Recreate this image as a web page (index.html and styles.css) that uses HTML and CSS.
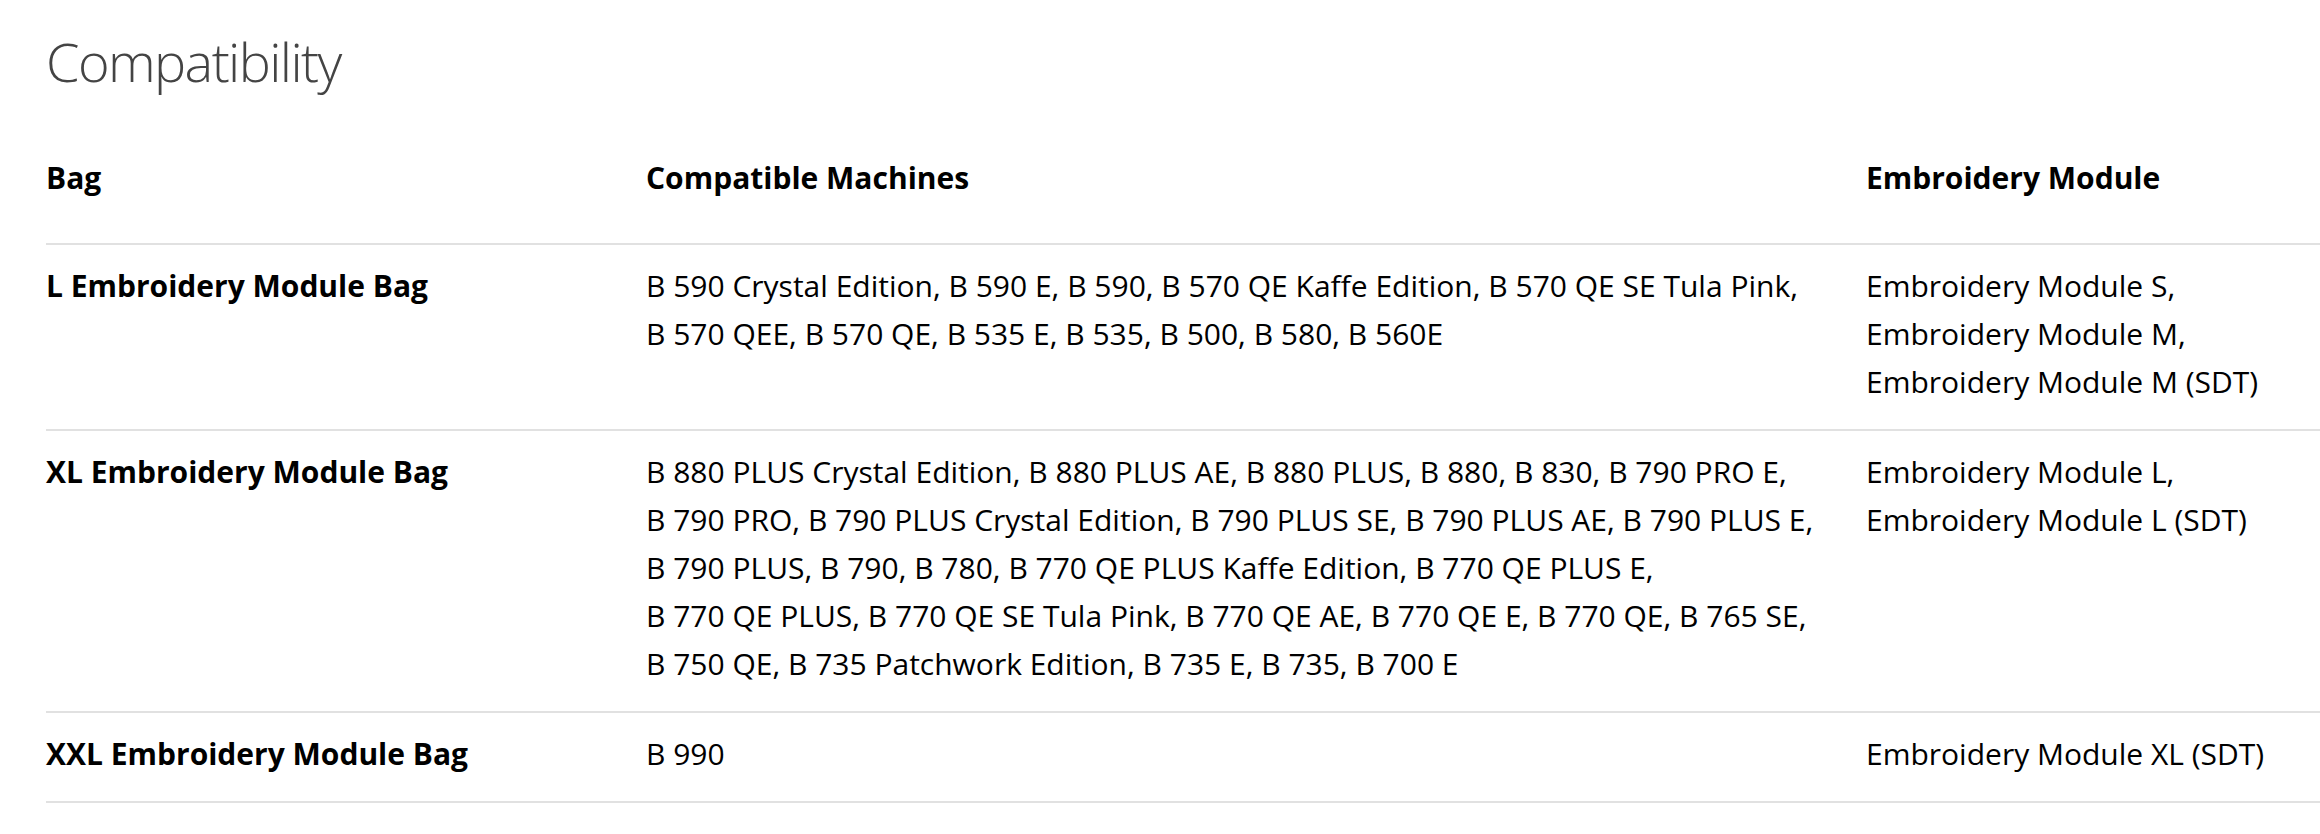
FILE: index.html
```html
<!DOCTYPE html>
<html lang="en">
<head>
<meta charset="utf-8">
<title>Compatibility</title>
<link rel="stylesheet" href="styles.css">
</head>
<body>
<section class="compat">
  <h2 class="compat__title">Compatibility</h2>
  <table class="compat__table">
    <colgroup>
      <col class="col-bag">
      <col class="col-machines">
      <col class="col-module">
    </colgroup>
    <thead>
      <tr>
        <th>Bag</th>
        <th>Compatible Machines</th>
        <th>Embroidery Module</th>
      </tr>
    </thead>
    <tbody>
      <tr>
        <th>L Embroidery Module Bag</th>
        <td>B&nbsp;590&nbsp;Crystal&nbsp;Edition, B&nbsp;590&nbsp;E, B&nbsp;590, B&nbsp;570&nbsp;QE&nbsp;Kaffe&nbsp;Edition, B&nbsp;570&nbsp;QE&nbsp;SE&nbsp;Tula&nbsp;Pink, B&nbsp;570&nbsp;QEE, B&nbsp;570&nbsp;QE, B&nbsp;535&nbsp;E, B&nbsp;535, B&nbsp;500, B&nbsp;580, B&nbsp;560E</td>
        <td>Embroidery&nbsp;Module&nbsp;S, Embroidery&nbsp;Module&nbsp;M, Embroidery&nbsp;Module&nbsp;M&nbsp;(SDT)</td>
      </tr>
      <tr>
        <th>XL Embroidery Module Bag</th>
        <td>B&nbsp;880&nbsp;PLUS&nbsp;Crystal&nbsp;Edition, B&nbsp;880&nbsp;PLUS&nbsp;AE, B&nbsp;880&nbsp;PLUS, B&nbsp;880, B&nbsp;830, B&nbsp;790&nbsp;PRO&nbsp;E, B&nbsp;790&nbsp;PRO, B&nbsp;790&nbsp;PLUS&nbsp;Crystal&nbsp;Edition, B&nbsp;790&nbsp;PLUS&nbsp;SE, B&nbsp;790&nbsp;PLUS&nbsp;AE, B&nbsp;790&nbsp;PLUS&nbsp;E, B&nbsp;790&nbsp;PLUS, B&nbsp;790, B&nbsp;780, B&nbsp;770&nbsp;QE&nbsp;PLUS&nbsp;Kaffe&nbsp;Edition, B&nbsp;770&nbsp;QE&nbsp;PLUS&nbsp;E, B&nbsp;770&nbsp;QE&nbsp;PLUS, B&nbsp;770&nbsp;QE&nbsp;SE&nbsp;Tula&nbsp;Pink, B&nbsp;770&nbsp;QE&nbsp;AE, B&nbsp;770&nbsp;QE&nbsp;E, B&nbsp;770&nbsp;QE, B&nbsp;765&nbsp;SE, B&nbsp;750&nbsp;QE, B&nbsp;735&nbsp;Patchwork&nbsp;Edition, B&nbsp;735&nbsp;E, B&nbsp;735, B&nbsp;700&nbsp;E</td>
        <td>Embroidery&nbsp;Module&nbsp;L, Embroidery&nbsp;Module&nbsp;L&nbsp;(SDT)</td>
      </tr>
      <tr>
        <th>XXL Embroidery Module Bag</th>
        <td>B&nbsp;990</td>
        <td>Embroidery&nbsp;Module&nbsp;XL&nbsp;(SDT)</td>
      </tr>
    </tbody>
  </table>
</section>
</body>
</html>
```
FILE: styles.css
```css
html, body {
  margin: 0;
  padding: 0;
  background: #ffffff;
}

body {
  font-family: "Open Sans", "Noto Sans", sans-serif;
  color: #000000;
  overflow: hidden;
}

.compat {
  padding: 34px 0 0 46px;
}

.compat__title {
  margin: 0;
  font-size: 54px;
  line-height: 54px;
  font-weight: 300;
  letter-spacing: -1.6px;
  color: #444444;
}

.compat__table {
  margin-top: 66px;
  width: calc(100vw - 46px);
  border-collapse: collapse;
  table-layout: fixed;
  font-size: 30px;
  line-height: 48px;
}

.col-bag { width: 600px; }
.col-machines { width: 1220px; }

.compat__table th,
.compat__table td {
  text-align: left;
  vertical-align: top;
  padding: 17px 36px 23px 0;
}

.compat__table th {
  font-weight: 700;
}

.compat__table td {
  font-weight: 400;
}

.compat__table thead th {
  padding: 0 36px 41px 0;
}

.compat__table tbody tr {
  border-top: 2px solid #e1e1e1;
}

.compat__table tbody tr:last-child {
  border-bottom: 2px solid #e1e1e1;
}
```
